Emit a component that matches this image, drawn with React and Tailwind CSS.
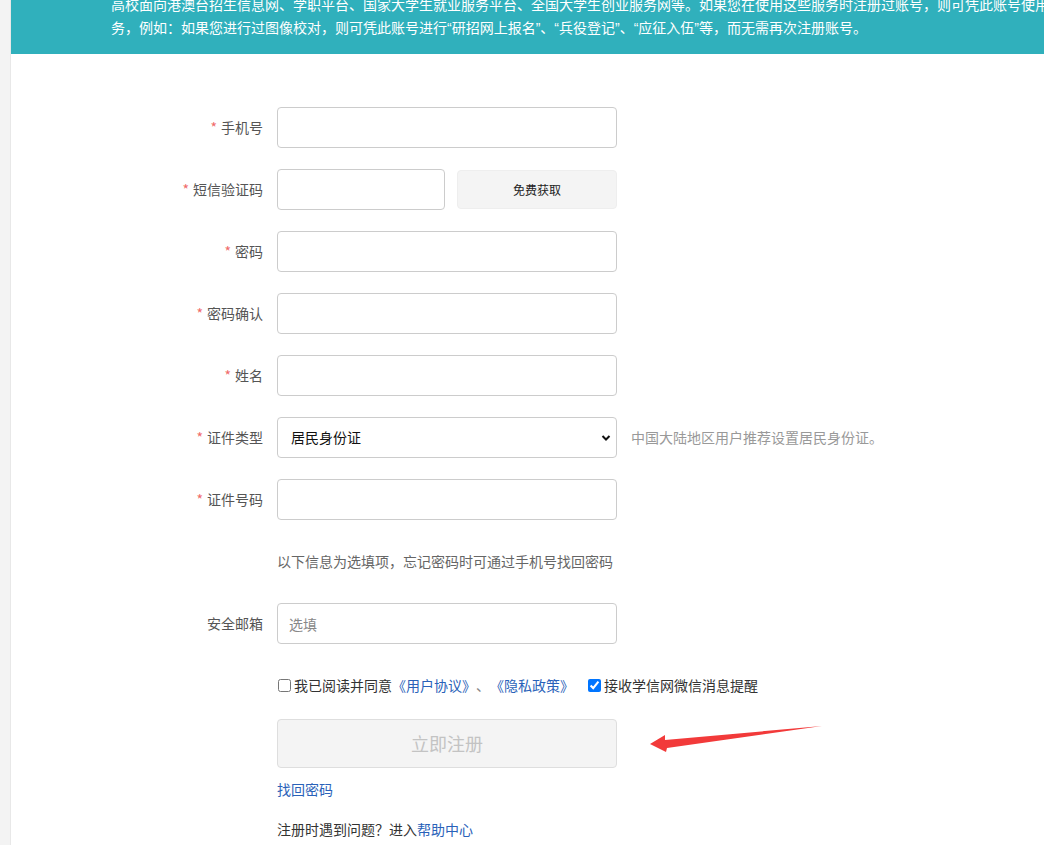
import React, { useState } from "react";

const font = { fontFamily: '"Noto Sans CJK SC", "Noto Sans", sans-serif' };

function Label({ text, required = true }) {
  return (
    <div className="w-[160px] mr-[14px] text-right text-[14px] text-[#555] shrink-0">
      {required && <span className="text-[#f06a6a] mr-[4px]">*</span>}
      {text}
    </div>
  );
}

function Row({ children }) {
  return <div className="flex items-center h-[41px] mb-[21px]">{children}</div>;
}

function TextInput({ placeholder, width = "w-[340px]" }) {
  return (
    <input
      type="text"
      placeholder={placeholder}
      className={`${width} h-[41px] border border-[#ccc] rounded-[4px] px-[11px] text-[14px] text-[#222] placeholder:text-[#888] outline-none bg-white`}
    />
  );
}

// narrow latin quote marks, as in the original banner
function Q({ children }) {
  return <span className="font-['Liberation_Sans',sans-serif]">{children}</span>;
}

export default function App() {
  const [agree, setAgree] = useState(false);
  const [wechat, setWechat] = useState(true);

  return (
    <div className="flex min-h-[845px] bg-white" style={font}>
      {/* left strip */}
      <div className="w-[11px] shrink-0 bg-[#f3f3f3] border-r border-[#e8e8e8]" />

      <div className="relative flex-1 overflow-hidden">
        {/* Banner */}
        <div className="h-[54px] bg-[#30b0bc] overflow-hidden">
          <div className="-mt-[7px] pl-[100px] text-[14px] leading-[23px] text-white whitespace-nowrap">
            <div>
              高校面向港澳台招生信息网、学职平台、国家大学生就业服务平台、全国大学生创业服务网等。如果您在使用这些服务时注册过账号，则可凭此账号使用服
            </div>
            <div>
              务，例如：如果您进行过图像校对，则可凭此账号进行<Q>“</Q>研招网上报名<Q>”</Q>、<Q>“</Q>兵役登记<Q>”</Q>、<Q>“</Q>应征入伍<Q>”</Q>等，而无需再次注册账号。
            </div>
          </div>
        </div>

        {/* Form */}
        <div className="pl-[92px] pt-[53px]">
          <Row>
            <Label text="手机号" />
            <TextInput />
          </Row>

          <Row>
            <Label text="短信验证码" />
            <TextInput width="w-[168px]" />
            <button className="ml-[12px] w-[160px] h-[39px] bg-[#f4f4f4] border border-[#eeeeee] rounded-[4px] text-[12px] text-[#222]">
              免费获取
            </button>
          </Row>

          <Row>
            <Label text="密码" />
            <TextInput />
          </Row>

          <Row>
            <Label text="密码确认" />
            <TextInput />
          </Row>

          <Row>
            <Label text="姓名" />
            <TextInput />
          </Row>

          <Row>
            <Label text="证件类型" />
            <div className="relative w-[340px] h-[41px]">
              <select className="appearance-none w-full h-full border border-[#ccc] rounded-[4px] pl-[13px] text-[14px] text-[#111] bg-white outline-none">
                <option>居民身份证</option>
              </select>
              <svg
                className="absolute right-[6px] top-1/2 -translate-y-1/2 pointer-events-none"
                width="10"
                height="8"
                viewBox="0 0 10 8"
              >
                <path d="M1.5 2 L5 5.5 L8.5 2" fill="none" stroke="#111" strokeWidth="2" />
              </svg>
            </div>
            <span className="ml-[14px] text-[14px] text-[#999]">中国大陆地区用户推荐设置居民身份证。</span>
          </Row>

          <Row>
            <Label text="证件号码" />
            <TextInput />
          </Row>

          <Row>
            <div className="w-[160px] mr-[14px] shrink-0" />
            <span className="text-[14px] text-[#666]">以下信息为选填项，忘记密码时可通过手机号找回密码</span>
          </Row>

          <Row>
            <Label text="安全邮箱" required={false} />
            <TextInput placeholder="选填" />
          </Row>

          <div className="flex items-center h-[41px]">
            <div className="w-[160px] mr-[14px] shrink-0" />
            <label className="flex items-center text-[14px] text-[#333]">
              <input
                type="checkbox"
                checked={agree}
                onChange={() => setAgree(!agree)}
                className="w-[13px] h-[13px] ml-[1px] mr-[3px]"
              />
              我已阅读并同意
              <a className="text-[#2a62b9]">《用户协议》</a>
              <span className="text-[#888]">、</span>
              <a className="text-[#2a62b9]">《隐私政策》</a>
            </label>
            <label className="flex items-center ml-[14px] text-[14px] text-[#333]">
              <input
                type="checkbox"
                checked={wechat}
                onChange={() => setWechat(!wechat)}
                className="w-[13px] h-[13px] mr-[3px]"
              />
              接收学信网微信消息提醒
            </label>
          </div>

          <div className="flex mt-[13px]">
            <div className="w-[160px] mr-[14px] shrink-0" />
            <div className="flex flex-col">
              <button className="w-[340px] h-[49px] bg-[#f4f4f4] border border-[#dedede] rounded-[4px] text-[18px] text-[#c3c3c3]">
                立即注册
              </button>
              <a className="mt-[11px] text-[14px] leading-[20px] text-[#2a62b9]">找回密码</a>
              <p className="mt-[20px] text-[14px] leading-[20px] text-[#333]">
                注册时遇到问题？进入<a className="text-[#2a62b9]">帮助中心</a>
              </p>
            </div>
          </div>
        </div>

        {/* red arrow annotation */}
        <svg
          className="absolute left-[629px] top-[715px] pointer-events-none"
          width="190"
          height="45"
          viewBox="640 715 190 45"
        >
          <polygon
            points="650,744 665,735 665,740 822,726 667,748 666,752"
            fill="#f23a3a"
          />
        </svg>
      </div>
    </div>
  );
}
